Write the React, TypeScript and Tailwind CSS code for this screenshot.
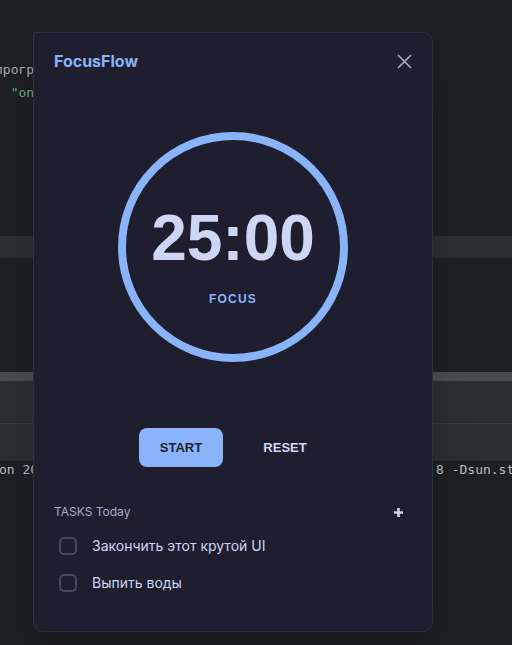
const mono = { fontFamily: '"DejaVu Sans Mono", "Liberation Mono", monospace' };

const tasks = ['Закончить этот крутой UI', 'Выпить воды'];

function IdeBackdrop() {
  return (
    <div className="w-full h-[645px] bg-[#1e1f22] overflow-hidden text-[13px]" style={mono}>
      <div className="h-[236px] pt-[58px] leading-[23px] whitespace-pre">
        <div className="-ml-[5px] text-[#a9abb0]">програ</div>
        <div className="-ml-[5px] text-[#6aab73]">  "on</div>
      </div>
      <div className="h-[22px] bg-[#2b2d30]" />
      <div className="h-[114px]" />
      <div className="h-[9px] bg-[#4a4c50]" />
      <div className="h-[42px] bg-[#2b2d30]" />
      <div className="h-px bg-[#393b40]" />
      <div className="h-[37px] bg-[#2b2d30]" />
      <div className="flex whitespace-pre leading-[16px] pt-[1px] text-[#bcbec4]">
        <span className="w-[437px] -ml-px shrink-0">on 20</span>
        <span>8 -Dsun.st</span>
      </div>
    </div>
  );
}

export default function App() {
  return (
    <div className="relative w-[512px] h-[645px] overflow-hidden">
      <IdeBackdrop />

      {/* FocusFlow panel */}
      <div
        className="absolute left-[33px] top-[32px] w-[400px] h-[600px] bg-[#1e1e2e] border border-[#2e2f40] rounded-[10px] rounded-tl-none shadow-2xl flex flex-col px-5 pt-4"
        style={{ fontFamily: 'Inter, "Noto Sans", sans-serif' }}
      >
        <div className="flex items-center justify-between h-6">
          <span className="text-base font-bold text-[#89b4fa]">FocusFlow</span>
          <svg width="15" height="15" viewBox="0 0 15 15" fill="none" stroke="#a6adc8" strokeWidth="1.6" strokeLinecap="round">
            <path d="M1.5 1.5l12 12M13.5 1.5l-12 12" />
          </svg>
        </div>

        <div className="mt-[59px] self-center w-[230px] h-[230px] rounded-full border-8 border-[#89b4fa] flex flex-col items-center pt-[66px]"
          style={{ fontFamily: '"Liberation Sans", Arial, sans-serif' }}
        >
          <span className="text-[64px] leading-none font-bold text-[#cdd6f4]">25:00</span>
          <span className="mt-[21px] text-xs leading-4 font-bold tracking-widest text-[#89b4fa]">FOCUS</span>
        </div>

        <div className="mt-[66px] flex justify-center gap-5" style={{ fontFamily: '"Liberation Sans", Arial, sans-serif' }}>
          <button className="w-[84px] h-[39px] rounded-lg bg-[#89b4fa] text-[13px] font-bold text-[#1e1e2e]">START</button>
          <button className="w-[84px] h-[39px] rounded-lg text-[13px] font-bold text-[#cdd6f4]">RESET</button>
        </div>

        <div className="mt-[37px] flex items-center justify-between h-4">
          <span className="text-xs text-[#a6adc8]">TASKS Today</span>
          <svg className="mr-[9px]" width="9" height="9" viewBox="0 0 9 9" fill="none" stroke="#cdd6f4" strokeWidth="2.6">
            <path d="M4.5 0v9M0 4.5h9" />
          </svg>
        </div>

        <div className="mt-[15px] flex flex-col gap-[15px] pl-[5px]">
          {tasks.map((t) => (
            <div key={t} className="h-[22px] flex items-center gap-[15px]">
              <span className="w-[18px] h-[18px] rounded-[5px] border-2 border-[#45475a] shrink-0" />
              <span className="text-sm text-[#cdd6f4]">{t}</span>
            </div>
          ))}
        </div>
      </div>
    </div>
  );
}
